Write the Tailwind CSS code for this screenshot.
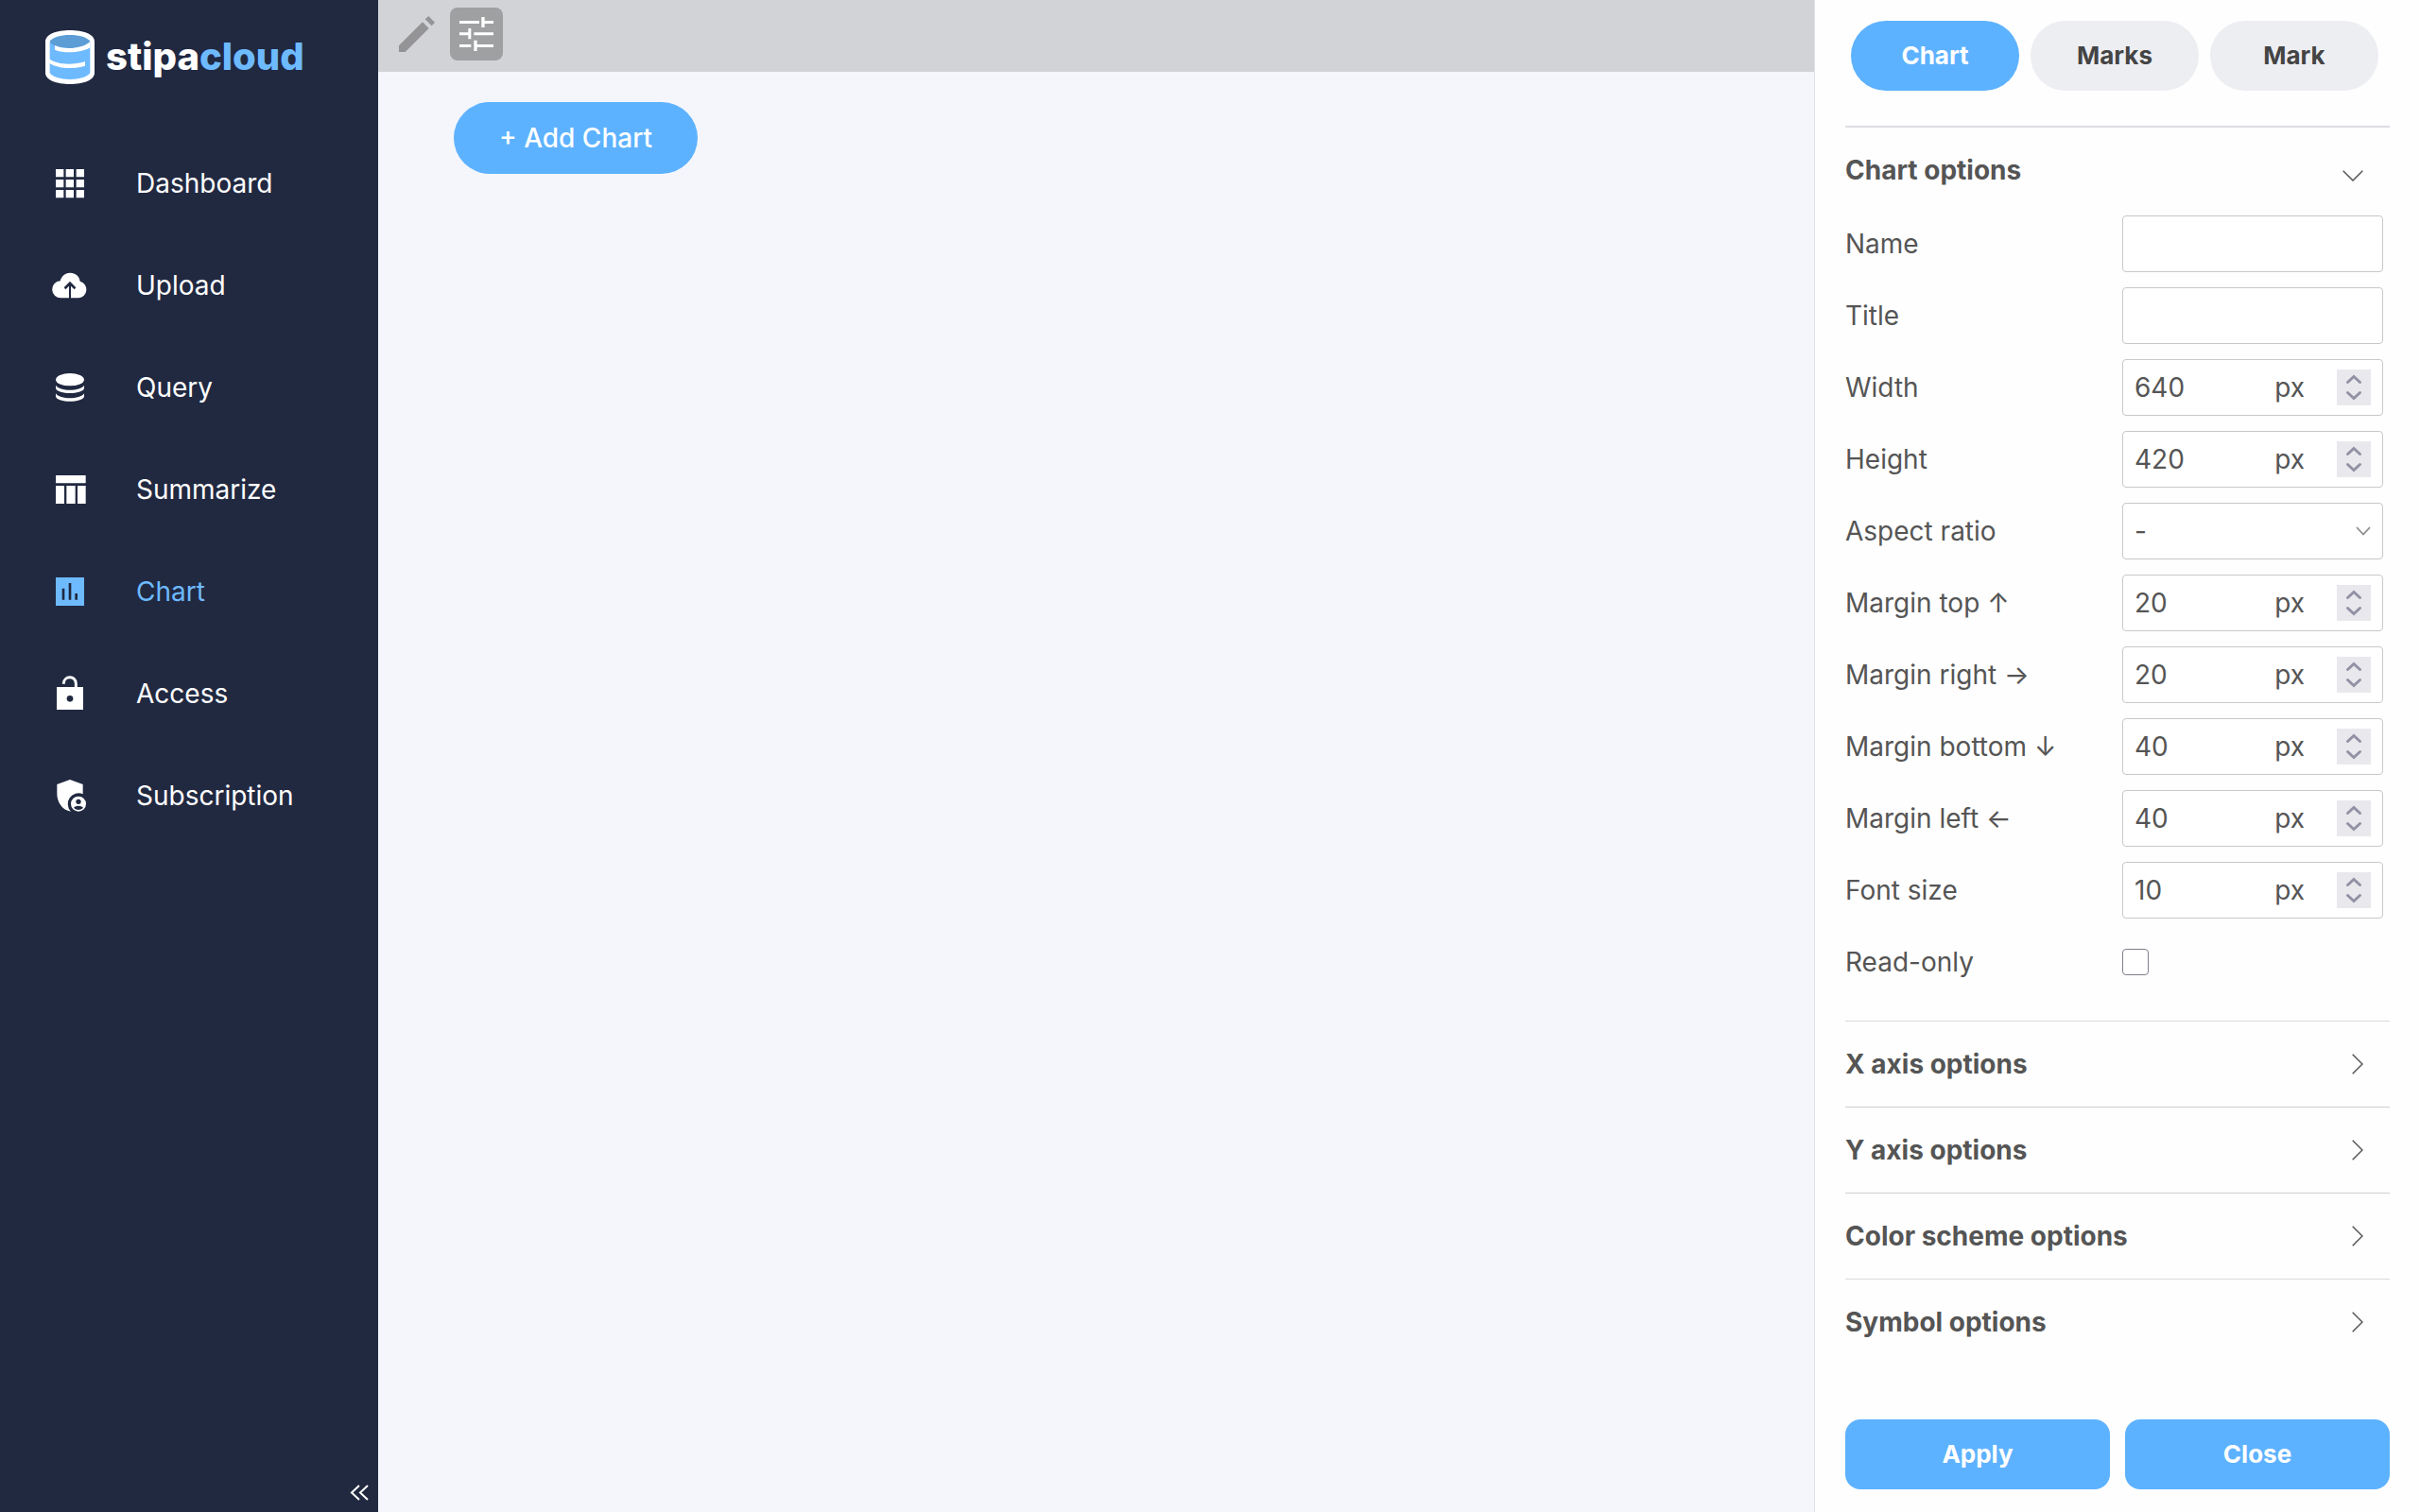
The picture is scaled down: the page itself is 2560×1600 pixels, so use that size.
<!DOCTYPE html>
<html lang="en">
<head>
    <meta charset="UTF-8">
    <meta name="viewport" content="width=device-width, initial-scale=1.0">
    <title>stipacloud - Chart</title>

    <script src="https://cdn.jsdelivr.net/npm/@tailwindcss/browser@4"></script>
</head>
<body class="flex h-screen overflow-hidden bg-[#f4f6fb] font-['Inter',sans-serif] text-[28px] leading-9 text-[#555555]">
    <!-- Shared icons -->
    <svg class="hidden">
        <symbol id="spin-up" viewBox="0 0 36 19"><path d="M11.5 13.5l6.5-6 6.5 6" fill="none" stroke="#9291a5" stroke-width="3" stroke-linecap="round"/></symbol>
        <symbol id="spin-down" viewBox="0 0 36 19"><path d="M11.5 5.5l6.5 6 6.5-6" fill="none" stroke="#9291a5" stroke-width="3" stroke-linecap="round"/></symbol>
        <symbol id="chevron-right" viewBox="0 0 12 22"><path d="M.7.7L11 11 .7 21.3" fill="none" stroke="#555" stroke-width="1.5"/></symbol>
    </svg>

    <!-- Sidebar -->
    <aside class="flex w-[400px] shrink-0 flex-col bg-[#212941] text-white">
        <a href="#" class="flex h-[140px] items-start gap-3 pt-8 pl-12">
            <svg class="h-[57px] w-[52px]" viewBox="144 96 156 171">
                <path d="M144 132C144 108 180 96 222 96s78 12 78 36v99c0 24-36 36-78 36s-78-12-78-36z" fill="#fff"/>
                <path d="M158 132v99c6 12 34 21 64 21s58-9 64-21v-99z" fill="#6ebaff"/>
                <path d="M158 132c8-14 34-21 64-21s56 7 64 21c-8 14-34 21-64 21s-56-7-64-21z" fill="#5d9dd5"/>
                <path d="M174 144c26 13 84 14 112-12v19c-28 18-84 19-112 7z" fill="#fff"/>
                <path d="M156 187c26 20 78 20 114 8v14c-36 11-84 10-114-9z" fill="#fff"/>
            </svg>
            <span class="pt-2 text-[40px] leading-10 font-extrabold">stipa<span class="text-[#6ebaff]">cloud</span></span>
        </a>
        <nav class="flex flex-col">
            <a href="#" class="flex h-[108px] items-center gap-[50px] pl-[54px]">
                <svg class="size-10" viewBox="162 522 120 120" fill="currentColor"><path d="M177 537h25v25h-25zM209 537h25v25h-25zM242 537h25v25h-25zM177 570h25v25h-25zM209 570h25v25h-25zM242 570h25v25h-25zM177 603h25v25h-25zM209 603h25v25h-25zM242 603h25v25h-25z"/></svg>
                Dashboard
            </a>
            <a href="#" class="flex h-[108px] items-center gap-[50px] pl-[54px]">
                <svg class="size-10" viewBox="162 846 120 120" fill="currentColor"><path d="M219 946v-38l-11 11-5-6 19-20 19 20-5 6-11-11v38h25a27 27 0 0 0 4-53c-2-16-14-27-32-27-16 0-27 11-31 26a27 27 0 0 0 3 54z"/></svg>
                Upload
            </a>
            <a href="#" class="flex h-[108px] items-center gap-[50px] pl-[54px]">
                <svg class="size-10" viewBox="162 180 120 120" fill="currentColor">
                    <ellipse cx="222" cy="215" rx="45" ry="20"/>
                    <path d="M177 233c12 20 78 20 90 0v10c-6 20-84 20-90 0zM177 259c12 20 78 20 90 0v10c-6 20-84 20-90 0z"/>
                </svg>
                Query
            </a>
            <a href="#" class="flex h-[108px] items-center gap-[50px] pl-[54px]">
                <svg class="size-10" viewBox="162 504 120 120" fill="currentColor"><path d="M177 519h95v25h-95zM177 552h27v57h-27zM211 552h28v57h-28zM246 552h26v57h-26z"/></svg>
                Summarize
            </a>
            <a href="#" class="flex h-[108px] items-center gap-[50px] pl-[54px] text-[#6ebaff]">
                <svg class="size-10" viewBox="162 828 120 120" fill="currentColor" fill-rule="evenodd"><path d="M177 843h90v90h-90zM197 878h8v36h-8zM218 861h8v53h-8zM238 894h8v20h-8z"/></svg>
                Chart
            </a>
            <a href="#" class="flex h-[108px] items-center gap-[50px] pl-[54px]">
                <svg class="size-10" viewBox="162 252 120 120">
                    <path d="M180 291h84v72h-84z" fill="currentColor"/>
                    <path d="M202 281v-1c0-25 39-27 39 0v12" fill="none" stroke="currentColor" stroke-width="9"/>
                    <circle cx="222" cy="328" r="10" fill="#212941"/>
                </svg>
                Access
            </a>
            <a href="#" class="flex h-[108px] items-center gap-[50px] pl-[54px]">
                <svg class="size-10" viewBox="162 576 120 120" fill="currentColor">
                    <path d="M222 585l41 15v31a34 34 0 0 0-38 55c-28-3-44-31-44-55v-31z"/>
                    <circle cx="249" cy="662" r="24"/>
                    <circle cx="249" cy="655" r="8" fill="#212941"/>
                    <path d="M234 674c5-8 25-8 30 0-8 9-22 9-30 0z" fill="#212941"/>
                </svg>
                Subscription
            </a>
        </nav>
        <button aria-label="Collapse sidebar" class="mt-auto mr-1 mb-1.5 self-end p-1">
            <svg class="h-5 w-6" viewBox="0 0 24 20" fill="none" stroke="currentColor" stroke-width="2"><path d="M12 2L4 9.500l8 7.500M21 2l-8 7.500 8 7.500"/></svg>
        </button>
    </aside>

    <!-- Workspace -->
    <main class="min-w-0 flex-1">
        <div class="flex h-[76px] items-start gap-2 bg-[#d2d3d7] pt-2 pl-3">
            <button aria-label="Edit" class="flex size-14 items-center justify-center rounded-lg">
                <svg class="size-[42px]" viewBox="87 42 126 126" fill="#949496"><path d="M190 48l20 20-10 11-21-21zM171 67l20 20-75 75H96v-20z"/></svg>
            </button>
            <button aria-label="Settings" class="flex size-14 items-center justify-center rounded-lg bg-[#9fa0a2]">
                <svg class="size-9" viewBox="288 54 108 108" fill="#fff"><path d="M288 66h63v9h-63zM358 54h10v12h28v9h-28v12h-10zM288 103h28V90h9v34h-9v-12h-28zM334 103h62v9h-62zM288 141h37v9h-37zM334 128h10v13h52v9h-52v12h-10z"/></svg>
            </button>
        </div>
        <div class="px-20 py-8">
            <button class="h-[76px] rounded-full bg-[#5db2ff] px-12 font-medium text-white">+ Add Chart</button>
        </div>
    </main>

    <!-- Options panel -->
    <aside class="flex w-[641px] shrink-0 flex-col border-l border-[#e0e2e9] bg-[#fefefe] px-8 pb-6">
        <div class="grid grid-cols-3 gap-3 pt-[22px] pr-3 pb-[37px] pl-1.5 text-[26px] font-bold">
            <button class="h-[74px] rounded-full bg-[#5db2ff] text-white">Chart</button>
            <button class="h-[74px] rounded-full bg-[#edeef2] text-[#444444]">Marks</button>
            <button class="h-[74px] rounded-full bg-[#edeef2] text-[#444444]">Mark</button>
        </div>

        <form class="flex min-h-0 flex-1 flex-col">
            <section class="border-t-2 border-[#dcdde3] pb-6">
                <button type="button" class="flex h-[85px] w-full items-center justify-between pt-1 pr-7 font-bold">
                    Chart options
                    <svg class="mt-3 h-3 w-[22px]" viewBox="0 0 22 12"><path d="M.7.7L11 11 21.3.7" fill="none" stroke="#555" stroke-width="1.5"/></svg>
                </button>
                <div class="grid auto-rows-[76px] grid-cols-[1fr_276px] items-center pr-[7px]">
                    <label for="name">Name</label>
                    <input id="name" type="text" class="h-[60px] w-full rounded border border-[#c8c8cb] bg-white px-3">

                    <label for="title">Title</label>
                    <input id="title" type="text" class="h-[60px] w-full rounded border border-[#c8c8cb] bg-white px-3">

                    <label for="width">Width</label>
                    <div class="flex h-[60px] items-center rounded border border-[#c8c8cb] bg-white px-3">
                        <input id="width" type="number" value="640" class="min-w-0 flex-1 [appearance:textfield]">
                        <span class="pr-[34px]">px</span>
                        <div class="flex flex-col bg-[#e9e9ed]">
                            <button type="button" aria-label="Increase width"><svg class="h-[19px] w-9"><use href="#spin-up"/></svg></button>
                            <button type="button" aria-label="Decrease width"><svg class="h-[19px] w-9"><use href="#spin-down"/></svg></button>
                        </div>
                    </div>

                    <label for="height">Height</label>
                    <div class="flex h-[60px] items-center rounded border border-[#c8c8cb] bg-white px-3">
                        <input id="height" type="number" value="420" class="min-w-0 flex-1 [appearance:textfield]">
                        <span class="pr-[34px]">px</span>
                        <div class="flex flex-col bg-[#e9e9ed]">
                            <button type="button" aria-label="Increase height"><svg class="h-[19px] w-9"><use href="#spin-up"/></svg></button>
                            <button type="button" aria-label="Decrease height"><svg class="h-[19px] w-9"><use href="#spin-down"/></svg></button>
                        </div>
                    </div>

                    <label for="ratio">Aspect ratio</label>
                    <div class="grid items-center">
                        <select id="ratio" class="col-start-1 row-start-1 h-[60px] w-full appearance-none rounded border border-[#c8c8cb] bg-white px-3">
                            <option>-</option>
                        </select>
                        <svg class="pointer-events-none col-start-1 row-start-1 mr-[13px] h-[10px] w-4 justify-self-end" viewBox="0 0 16 10"><path d="M1 1l7 7.500 7-7.500" fill="none" stroke="#8c8c8c" stroke-width="1.8"/></svg>
                    </div>

                    <label for="margin-top">Margin top ↑</label>
                    <div class="flex h-[60px] items-center rounded border border-[#c8c8cb] bg-white px-3">
                        <input id="margin-top" type="number" value="20" class="min-w-0 flex-1 [appearance:textfield]">
                        <span class="pr-[34px]">px</span>
                        <div class="flex flex-col bg-[#e9e9ed]">
                            <button type="button" aria-label="Increase top margin"><svg class="h-[19px] w-9"><use href="#spin-up"/></svg></button>
                            <button type="button" aria-label="Decrease top margin"><svg class="h-[19px] w-9"><use href="#spin-down"/></svg></button>
                        </div>
                    </div>

                    <label for="margin-right">Margin right →</label>
                    <div class="flex h-[60px] items-center rounded border border-[#c8c8cb] bg-white px-3">
                        <input id="margin-right" type="number" value="20" class="min-w-0 flex-1 [appearance:textfield]">
                        <span class="pr-[34px]">px</span>
                        <div class="flex flex-col bg-[#e9e9ed]">
                            <button type="button" aria-label="Increase right margin"><svg class="h-[19px] w-9"><use href="#spin-up"/></svg></button>
                            <button type="button" aria-label="Decrease right margin"><svg class="h-[19px] w-9"><use href="#spin-down"/></svg></button>
                        </div>
                    </div>

                    <label for="margin-bottom">Margin bottom ↓</label>
                    <div class="flex h-[60px] items-center rounded border border-[#c8c8cb] bg-white px-3">
                        <input id="margin-bottom" type="number" value="40" class="min-w-0 flex-1 [appearance:textfield]">
                        <span class="pr-[34px]">px</span>
                        <div class="flex flex-col bg-[#e9e9ed]">
                            <button type="button" aria-label="Increase bottom margin"><svg class="h-[19px] w-9"><use href="#spin-up"/></svg></button>
                            <button type="button" aria-label="Decrease bottom margin"><svg class="h-[19px] w-9"><use href="#spin-down"/></svg></button>
                        </div>
                    </div>

                    <label for="margin-left">Margin left ←</label>
                    <div class="flex h-[60px] items-center rounded border border-[#c8c8cb] bg-white px-3">
                        <input id="margin-left" type="number" value="40" class="min-w-0 flex-1 [appearance:textfield]">
                        <span class="pr-[34px]">px</span>
                        <div class="flex flex-col bg-[#e9e9ed]">
                            <button type="button" aria-label="Increase left margin"><svg class="h-[19px] w-9"><use href="#spin-up"/></svg></button>
                            <button type="button" aria-label="Decrease left margin"><svg class="h-[19px] w-9"><use href="#spin-down"/></svg></button>
                        </div>
                    </div>

                    <label for="font-size">Font size</label>
                    <div class="flex h-[60px] items-center rounded border border-[#c8c8cb] bg-white px-3">
                        <input id="font-size" type="number" value="10" class="min-w-0 flex-1 [appearance:textfield]">
                        <span class="pr-[34px]">px</span>
                        <div class="flex flex-col bg-[#e9e9ed]">
                            <button type="button" aria-label="Increase font size"><svg class="h-[19px] w-9"><use href="#spin-up"/></svg></button>
                            <button type="button" aria-label="Decrease font size"><svg class="h-[19px] w-9"><use href="#spin-down"/></svg></button>
                        </div>
                    </div>

                    <label for="read-only">Read-only</label>
                    <input id="read-only" type="checkbox" class="size-7 appearance-none rounded border border-[#80808e] bg-white">
                </div>
            </section>

            <button type="button" class="flex h-[91px] items-center justify-between border-t border-[#d9dae0] pr-7 font-bold">
                X axis options
                <svg class="h-[22px] w-3"><use href="#chevron-right"/></svg>
            </button>
            <button type="button" class="flex h-[91px] items-center justify-between border-t border-[#cfcfd2] pr-7 font-bold">
                Y axis options
                <svg class="h-[22px] w-3"><use href="#chevron-right"/></svg>
            </button>
            <button type="button" class="flex h-[91px] items-center justify-between border-t border-[#cfcfd2] pr-7 font-bold">
                Color scheme options
                <svg class="h-[22px] w-3"><use href="#chevron-right"/></svg>
            </button>
            <button type="button" class="flex h-[91px] items-center justify-between border-t border-[#d9d9dc] pr-7 font-bold">
                Symbol options
                <svg class="h-[22px] w-3"><use href="#chevron-right"/></svg>
            </button>

            <div class="mt-auto grid grid-cols-2 gap-4 text-[26px] font-bold text-white">
                <button type="submit" class="h-[74px] rounded-2xl bg-[#5db2ff]">Apply</button>
                <button type="button" class="h-[74px] rounded-2xl bg-[#5db2ff]">Close</button>
            </div>
        </form>
    </aside>
</body>
</html>
